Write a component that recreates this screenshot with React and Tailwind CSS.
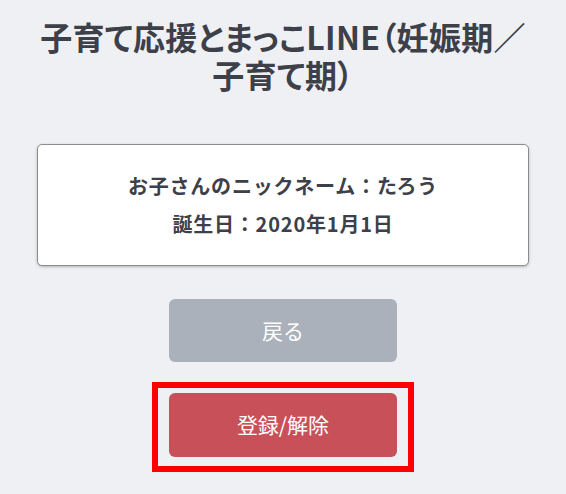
export default function App() {
  return (
    <div className="min-h-[494px] w-full bg-[#eff0f4] flex flex-col items-center">
      <h1 className="mt-[17px] text-center text-[32px] leading-[38px] font-bold text-[#3d4049] [font-family:'Noto_Sans_CJK_JP','Noto_Sans',sans-serif] [font-feature-settings:'palt'] tracking-[0.01em]">
        子育て応援とまっこLINE（妊娠期／
        <br />
        子育て期）
      </h1>
      <div className="mt-[51px] w-[492px] h-[122px] bg-white border border-[#8c8c8c] rounded-[5px] shadow-[0_1px_3px_rgba(0,0,0,0.25)] flex flex-col items-center justify-center text-[#3d4049] font-bold text-[20px] leading-[38px] [font-family:'Noto_Sans_CJK_JP','Noto_Sans',sans-serif] tracking-[0.04em]">
        <p>お子さんのニックネーム：たろう</p>
        <p>誕生日：2020年1月1日</p>
      </div>
      <button className="mt-[33px] w-[228px] h-[63px] rounded-[6px] bg-[#aab1ba] text-white text-[21px] [font-family:'Noto_Sans_CJK_JP','Noto_Sans',sans-serif]">
        戻る
      </button>
      <div className="mt-[20px] border-[6px] border-[#ff0000] pt-[5px] pb-[9px] px-[11px]">
        <button className="w-[228px] h-[64px] rounded-[6px] bg-[#c85059] text-white text-[21px] [font-family:'Noto_Sans_CJK_JP','Noto_Sans',sans-serif]">
          登録/解除
        </button>
      </div>
    </div>
  );
}
